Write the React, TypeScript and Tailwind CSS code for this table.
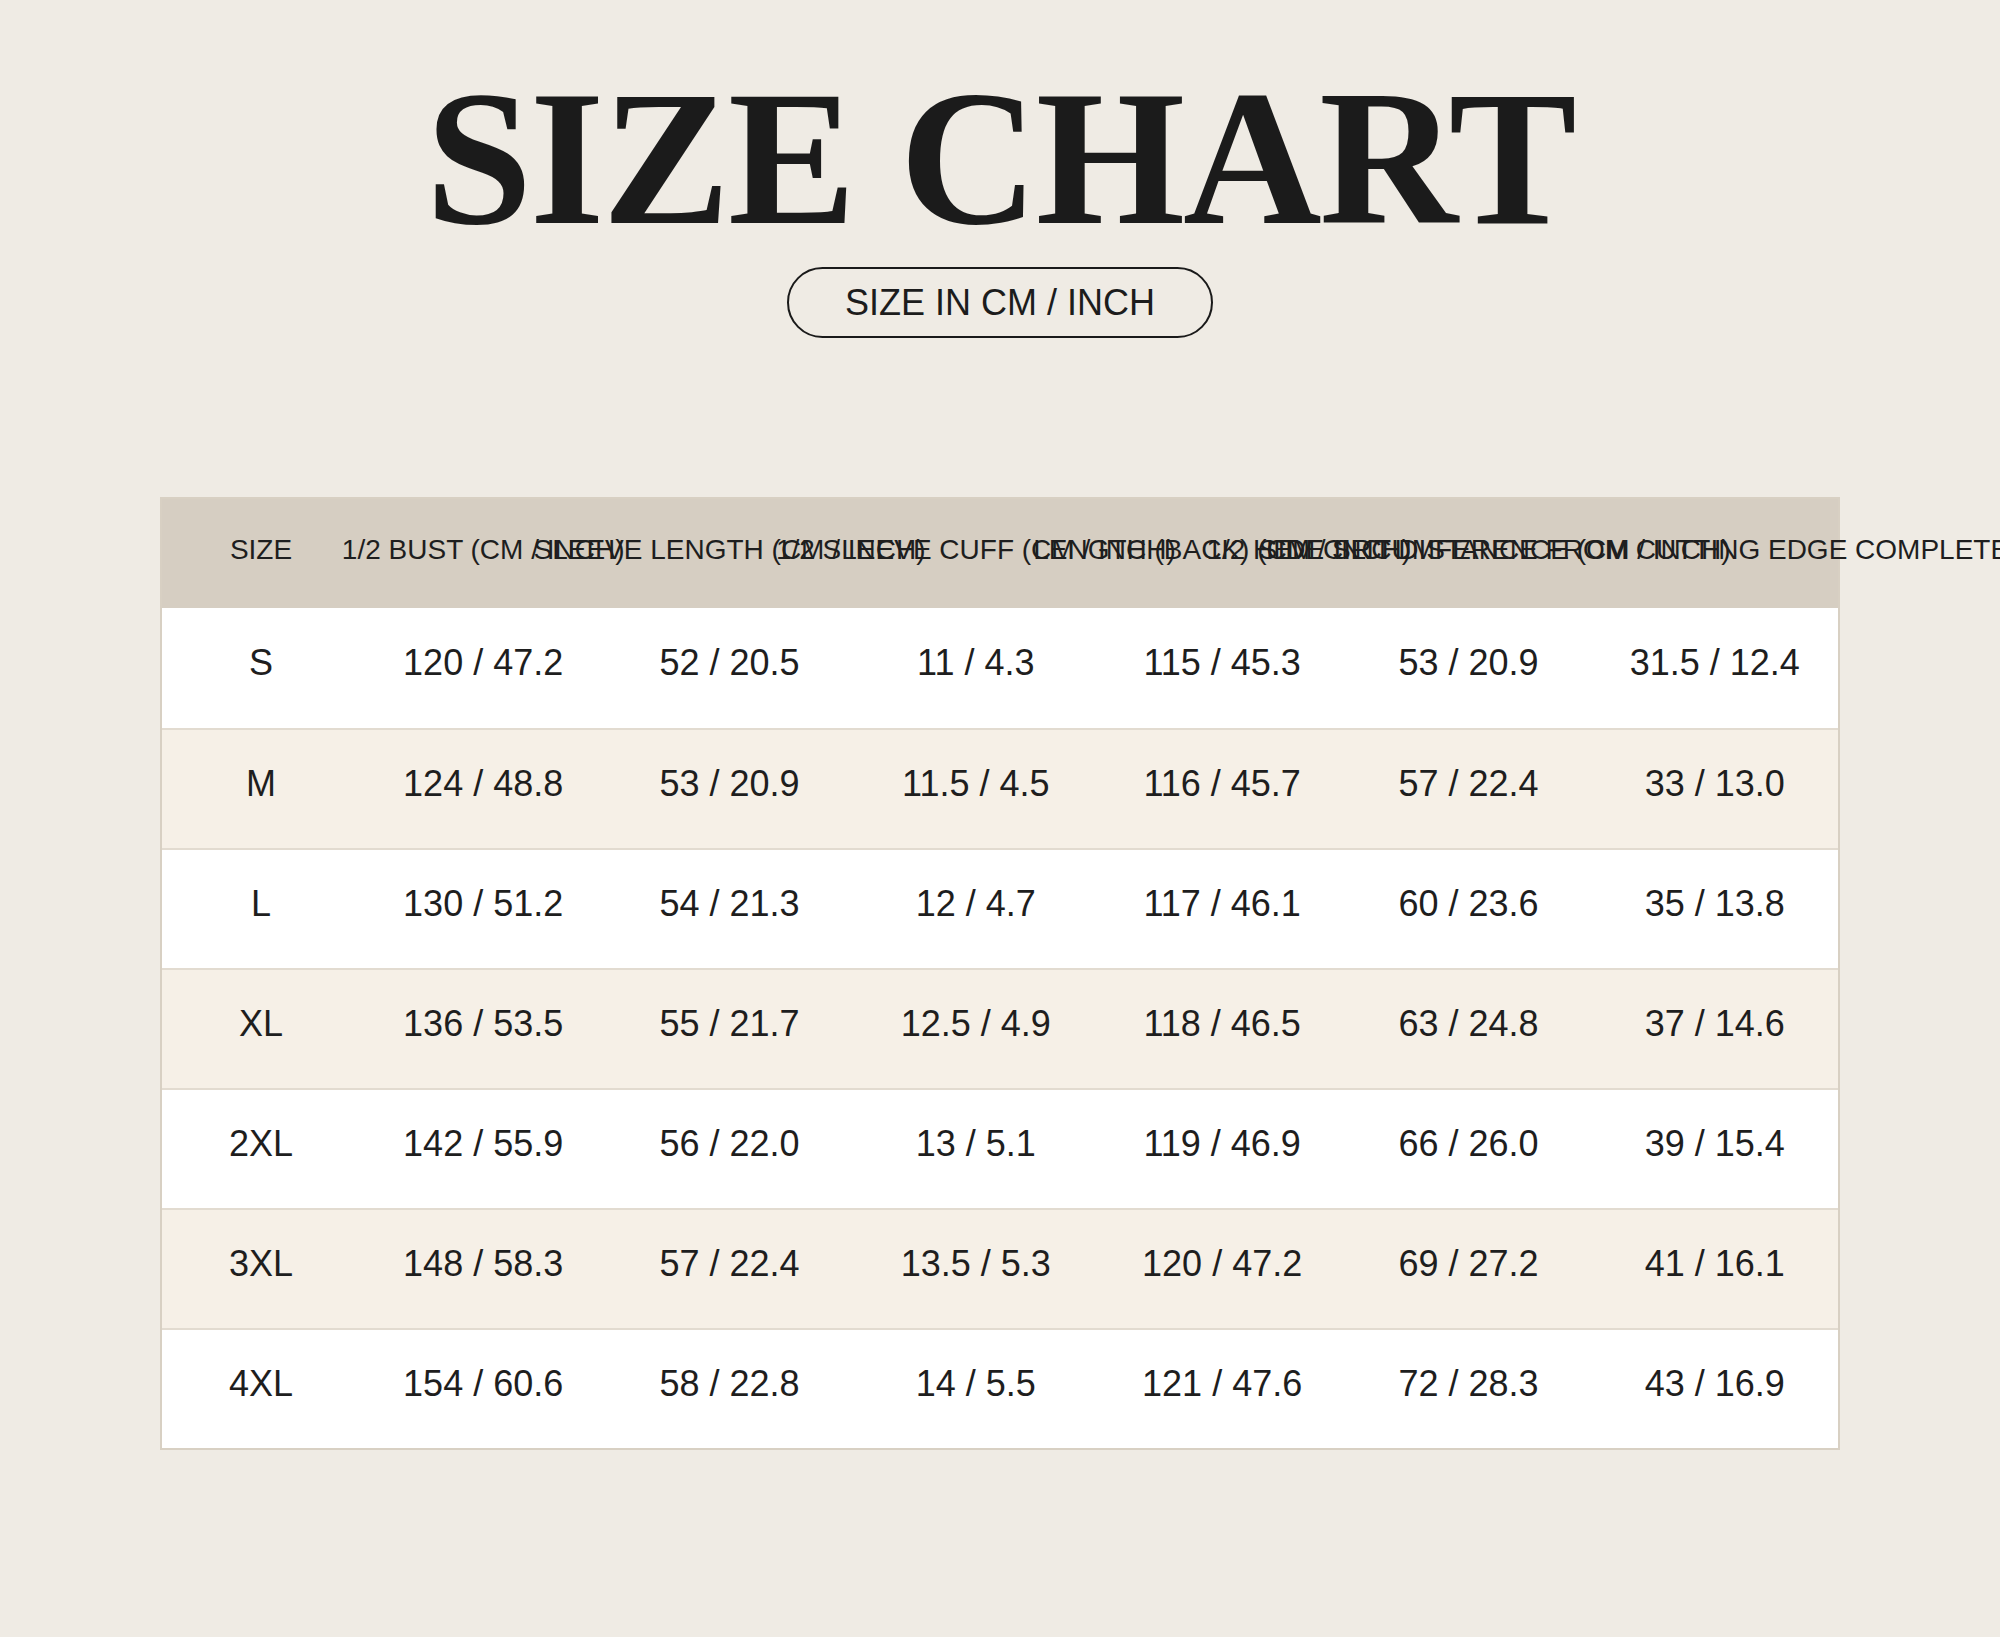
import React from "react";

const HEADERS = [
  "SIZE",
  "1/2 BUST (CM / INCH)",
  "SLEEVE LENGTH (CM / INCH)",
  "1/2 SLEEVE CUFF (CM / INCH)",
  "LENGTH (BACK) (CM / INCH)",
  "1/2 HEM CIRCUMFERENCE (CM / INCH)",
  "SIDE SLIT DISTANCE FROM CUTTING EDGE COMPLETE (CM / INCH)",
];

const ROWS: string[][] = [
  ["S", "120 / 47.2", "52 / 20.5", "11 / 4.3", "115 / 45.3", "53 / 20.9", "31.5 / 12.4"],
  ["M", "124 / 48.8", "53 / 20.9", "11.5 / 4.5", "116 / 45.7", "57 / 22.4", "33 / 13.0"],
  ["L", "130 / 51.2", "54 / 21.3", "12 / 4.7", "117 / 46.1", "60 / 23.6", "35 / 13.8"],
  ["XL", "136 / 53.5", "55 / 21.7", "12.5 / 4.9", "118 / 46.5", "63 / 24.8", "37 / 14.6"],
  ["2XL", "142 / 55.9", "56 / 22.0", "13 / 5.1", "119 / 46.9", "66 / 26.0", "39 / 15.4"],
  ["3XL", "148 / 58.3", "57 / 22.4", "13.5 / 5.3", "120 / 47.2", "69 / 27.2", "41 / 16.1"],
  ["4XL", "154 / 60.6", "58 / 22.8", "14 / 5.5", "121 / 47.6", "72 / 28.3", "43 / 16.9"],
];

export default function App() {
  return (
    <div className="w-full min-h-[1637px] overflow-hidden bg-[#efebe4] flex flex-col items-center pt-[63px] font-['Liberation_Sans',Arial,sans-serif] text-[#1c1c1c]">
      {/* Title */}
      <h1 className="font-['Liberation_Serif','Times_New_Roman',serif] font-bold text-[192px] leading-none tracking-[-0.012em] text-[#1b1b1b]">
        SIZE CHART
      </h1>

      <div className="mt-[12px] w-[426px] h-[71px] rounded-full border-[2.5px] border-[#1a1a1a] flex items-center justify-center text-[36px] leading-none">
        SIZE IN CM / INCH
      </div>

      {/* Table */}
      <div className="mt-[159px] w-[1680px] border-2 border-[#d8d0c3] bg-white">
        <div className="grid grid-cols-[198px_repeat(6,minmax(0,1fr))] h-[109px] bg-[#d6cec2]">
          {HEADERS.map((h) => (
            <div key={h} className="flex items-center justify-center whitespace-nowrap pb-[8px] text-[28px] text-[#1e1e1e]">
              {h}
            </div>
          ))}
        </div>
        {ROWS.map((row, i) => (
          <div
            key={row[0]}
            className={
              "grid grid-cols-[198px_repeat(6,minmax(0,1fr))] h-[120px] " +
              (i > 0 ? "border-t-2 border-[#e2dbd0] " : "") +
              (i % 2 === 1 ? "bg-[#f6f0e7]" : "bg-white")
            }
          >
            {row.map((c, j) => (
              <div key={j} className="flex items-center justify-center whitespace-nowrap pb-[10px] text-[36px] text-[#1e1e1e]">
                {c}
              </div>
            ))}
          </div>
        ))}
      </div>
    </div>
  );
}
